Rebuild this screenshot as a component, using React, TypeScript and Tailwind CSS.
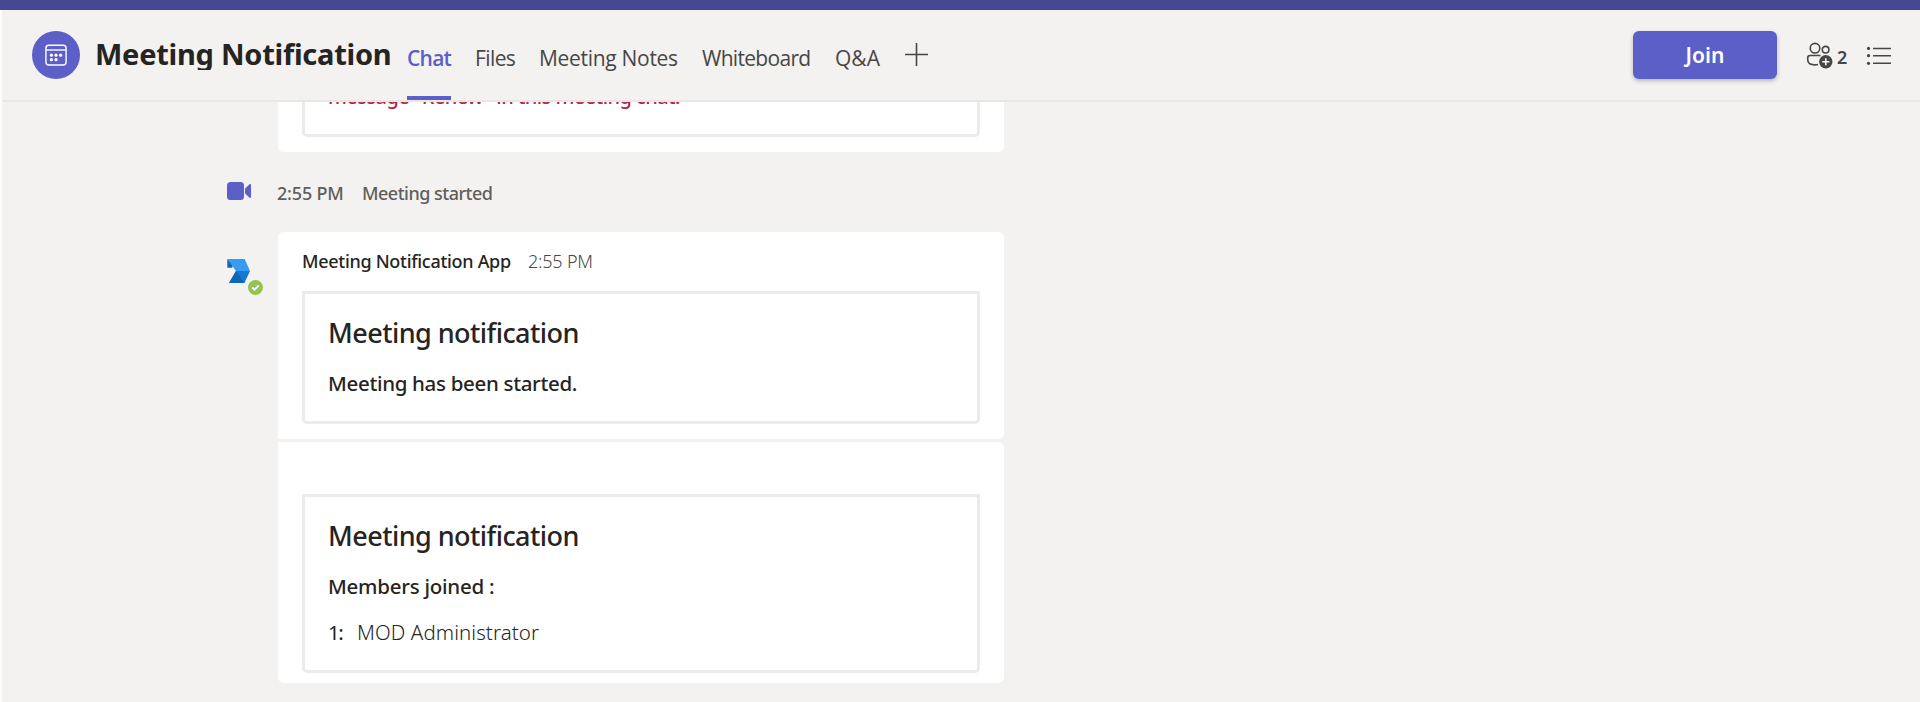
import type { ReactNode } from "react";

function CalendarIcon() {
  return (
    <svg width="24" height="24" viewBox="0 0 24 24" fill="none" stroke="white" strokeWidth="1.4">
      <rect x="1.9" y="2.2" width="20.2" height="19.8" rx="3" />
      <path d="M2 7h20" />
      <g fill="white" stroke="none">
        <circle cx="7.4" cy="12.2" r="1.6" />
        <circle cx="12" cy="12.2" r="1.6" />
        <circle cx="16.6" cy="12.2" r="1.6" />
        <circle cx="7.4" cy="16.7" r="1.6" />
        <circle cx="12" cy="16.7" r="1.6" />
      </g>
    </svg>
  );
}

function PeopleIcon() {
  return (
    <svg width="28" height="28" viewBox="0 0 28 28" fill="none" stroke="#484644" strokeWidth="1.6">
      <circle cx="9" cy="6.2" r="4.8" />
      <circle cx="19.6" cy="7.7" r="3.3" />
      <path d="M14.5 13.5H4.2a2.5 2.5 0 0 0-2.5 2.5v1.5c0 3.5 3 5.4 7.3 5.4 1.2 0 2.2-.1 3-.4" />
      <circle cx="19.8" cy="19.7" r="6.7" fill="#484644" stroke="none" />
      <path d="M19.8 16.2v7M16.3 19.7h7" stroke="white" strokeWidth="1.5" />
    </svg>
  );
}

function ListIcon() {
  return (
    <svg width="26" height="20" viewBox="0 0 26 20" fill="#484644">
      <circle cx="2.5" cy="2.4" r="1.6" />
      <circle cx="2.5" cy="9.7" r="1.6" />
      <circle cx="2.5" cy="17.3" r="1.6" />
      <path d="M7 2.4h18M7 9.7h18M7 17.3h18" stroke="#484644" strokeWidth="1.5" />
    </svg>
  );
}

function CameraIcon() {
  return (
    <svg width="24" height="18" viewBox="0 0 24 18" fill="#5b5fc7">
      <rect width="17" height="18" rx="3.5" />
      <path d="M18 6.5 22.3 2.4C23 1.8 24 2 24 3v12c0 1-1 1.2-1.7.6L18 11.5z" />
    </svg>
  );
}

function AppLogo() {
  return (
    <svg width="24" height="24" viewBox="0 0 24 24">
      <path d="M.3 0 5.8 5.5 5.3 8.7H.3z" fill="#1166b1" />
      <path d="M.3 0h17.4L23 12H9L.3 0z" fill="#379cf1" />
      <path d="M9 12h14l-5.6 12H2z" fill="#1479d0" />
      <path d="M9 12l8.4 12H2z" fill="#0e66b4" />
    </svg>
  );
}

function Bordered({ children, className }: { children: ReactNode; className: string }) {
  return (
    <div className={`rounded-b-[5px] border-[3px] border-[#ebebea] pl-[23px] pt-[21px] ${className}`}>
      <h2 className="text-[27px] leading-9 font-medium tracking-[-0.55px]">Meeting notification</h2>
      {children}
    </div>
  );
}

export default function App() {
  return (
    <div className="flex h-[702px] w-full flex-col overflow-hidden bg-[#f3f2f1] font-['Noto_Sans',sans-serif] whitespace-nowrap text-[#252423]">
      <div className="h-[10px] shrink-0 bg-[#464991]" />
      <div className="flex min-h-0 flex-1 flex-col border-l-2 border-[#fdfdfd]">
        <header className="flex h-[92px] shrink-0 items-start border-b-2 border-[#e8e7e6]">
          <div className="mt-[21px] ml-[30px] flex size-12 items-center justify-center rounded-full bg-[#5b5fc7]">
            <CalendarIcon />
          </div>
          <h1 className="mt-[26px] ml-[15px] h-[34px] w-[298px] overflow-hidden text-[29px] leading-9 font-bold tracking-[-0.25px]">
            Meeting Notification
          </h1>
          <nav className="ml-[14px] flex h-[90px] gap-6 font-['Open_Sans',sans-serif] text-[21px] leading-7 text-[#484644]">
            <div className="w-[44px] border-b-4 border-[#5b5fc7] pt-[34px] font-semibold tracking-[-0.75px] text-[#5b5fc7]">Chat</div>
            <div className="w-[40px] pt-[34px] tracking-[-0.6px]">Files</div>
            <div className="w-[139px] pt-[34px] tracking-[-0.3px]">Meeting Notes</div>
            <div className="w-[109px] pt-[34px] tracking-[-0.7px]">Whiteboard</div>
            <div className="w-[46px] pt-[34px]">Q&amp;A</div>
            <svg className="mt-[33px]" width="23" height="23" viewBox="0 0 23 23" stroke="#484644" strokeWidth="1.6">
              <path d="M11.5 0v23M0 11.5h23" />
            </svg>
          </nav>
          <button className="mt-[21px] ml-auto h-12 w-36 rounded-[6px] bg-[#5b5fc7] text-[21px] leading-[48px] font-semibold text-white shadow-[0_2px_4px_rgba(0,0,0,0.25)]">
            Join
          </button>
          <div className="mt-8 ml-[29px]">
            <PeopleIcon />
          </div>
          <span className="mt-[35px] ml-[3px] w-[11px] text-[18px] leading-6 font-semibold text-[#484644]">2</span>
          <div className="mt-9 mr-7 ml-[18px]">
            <ListIcon />
          </div>
        </header>
        <main className="flex min-h-0 flex-1 flex-col overflow-hidden pl-[225px]">
          <section className="ml-[51px] h-[50px] w-[726px] shrink-0 rounded-b-[6px] bg-white px-6 pb-[15px]">
            <div className="flex h-[35px] items-start rounded-b-[5px] border-x-[3px] border-b-[3px] border-[#ebebea] pl-[23px]">
              <p className="-mt-[19px] text-[20px] leading-7 font-medium tracking-[-0.57px] text-[#b02a47]">
                message "Renew" in this meeting chat.
              </p>
            </div>
          </section>
          <div className="mt-[29px] flex h-6 shrink-0 text-[18px] leading-6 font-medium text-[#605e5c]">
            <div className="w-[50px] pt-px">
              <CameraIcon />
            </div>
            <span className="w-[85px] tracking-[-0.2px]">2:55 PM</span>
            <span className="tracking-[-0.5px]">Meeting started</span>
          </div>
          <div className="mt-[27px] flex shrink-0">
            <div className="relative mt-[27px] h-9 w-[51px]">
              <AppLogo />
              <svg className="absolute top-[21px] left-[21px]" width="15" height="15" viewBox="0 0 15 15">
                <circle cx="7.5" cy="7.5" r="7.5" fill="#92c353" />
                <path d="m4.3 7.5 2.2 2.2 4.2-4.2" fill="none" stroke="white" strokeWidth="1.8" />
              </svg>
            </div>
            <div className="flex w-[726px] flex-col gap-[3px]">
              <section className="h-[207px] rounded-tl-[6px] rounded-r-[6px] bg-white px-6 pt-[17px]">
                <div className="flex h-6 text-[18px] leading-6">
                  <span className="w-[226px] font-medium tracking-[-0.3px]">Meeting Notification App</span>
                  <span className="font-light tracking-[-0.2px] text-[#484644]">2:55 PM</span>
                </div>
                <Bordered className="mt-[18px] h-[133px]">
                  <p className="mt-[18px] text-[20.5px] leading-7 font-medium tracking-[-0.32px]">Meeting has been started.</p>
                </Bordered>
              </section>
              <section className="h-[241px] rounded-r-[6px] rounded-bl-[6px] bg-white px-6 pt-[52px]">
                <Bordered className="h-[179px]">
                  <p className="mt-[18px] text-[20.5px] leading-7 font-medium tracking-[-0.25px]">Members joined :</p>
                  <p className="mt-[18px] flex text-[20.5px] leading-7">
                    <span className="w-[29px] tracking-[-1.5px]">1:</span>
                    <span className="font-light tracking-[0.08px]">MOD Administrator</span>
                  </p>
                </Bordered>
              </section>
            </div>
          </div>
        </main>
      </div>
    </div>
  );
}
